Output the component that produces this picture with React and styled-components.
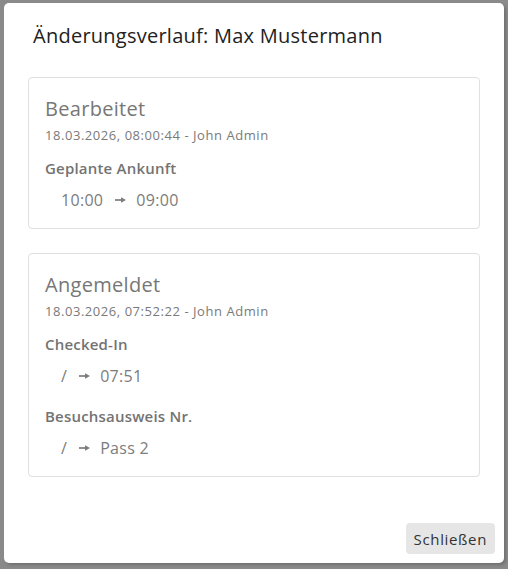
import React from 'react';
import styled, { createGlobalStyle } from 'styled-components';

const GlobalStyle = createGlobalStyle`
  html, body {
    margin: 0;
    padding: 0;
    background: #ffffff;
    font-family: "Open Sans", "Liberation Sans", sans-serif;
  }
`;

const Backdrop = styled.div`
  position: fixed;
  inset: 0;
  background-color: #8a8a8a;
  padding-top: 3px;
  overflow: hidden;
`;

const ModalWrapper = styled.div`
  width: 500px;
  height: 560px;
  margin: 0 auto;
  background-color: #ffffff;
  border-radius: 5px;
  box-shadow: 2px 2px 3px rgba(0, 0, 0, 0.18);
  display: flex;
  flex-direction: column;
  box-sizing: border-box;
`;

const ModalHeader = styled.div`
  padding: 18px 24px 0 29px;
`;

const HeaderText = styled.h2`
  margin: 0;
  font-size: 20px;
  line-height: 30px;
  font-weight: 400;
  letter-spacing: 0.25px;
  color: #222222;
`;

const ModalBody = styled.div`
  padding: 26px 24px 0 24px;
  display: flex;
  flex-direction: column;
  gap: 24px;
`;

const Card = styled.div`
  border: solid 1px #e0e0e0;
  border-radius: 4px;
  padding: 16px 16px;
`;

const CardTitle = styled.div`
  font-size: 20px;
  line-height: 30px;
  letter-spacing: 0.3px;
  color: #777777;
`;

const CardMeta = styled.div`
  margin-top: 2px;
  font-size: 13px;
  line-height: 19.5px;
  letter-spacing: 0.55px;
  color: #7a7a7a;
`;

const ChangeItem = styled.div`
  margin-top: ${(p) => (p.first ? '11.5px' : '17px')};
`;

const ChangeLabel = styled.div`
  font-size: 15px;
  line-height: 22.5px;
  font-weight: 600;
  letter-spacing: 0.2px;
  color: #737373;
`;

const ChangeValue = styled.div`
  margin-top: 8.5px;
  padding-left: 16px;
  font-size: 16px;
  line-height: 24px;
  letter-spacing: 0.3px;
  color: #7c7c7c;
  display: flex;
  align-items: center;
`;

const ArrowIcon = styled.svg`
  margin: 0 10px 0 12px;
  flex: none;
`;

const ModalFooter = styled.div`
  margin-top: auto;
  display: flex;
  justify-content: flex-end;
  padding: 0 9px 9px 9px;
`;

const CloseButton = styled.button`
  height: 31px;
  padding: 0 8px;
  border: none;
  border-radius: 4px;
  background-color: #e6e6e6;
  color: #333333;
  font-family: "Open Sans", "Liberation Sans", sans-serif;
  font-size: 15px;
  letter-spacing: 0.65px;
  cursor: pointer;
`;

const Arrow = () => (
  <ArrowIcon width="11" height="8" viewBox="0 0 11 8">
    <line x1="0" y1="4" x2="7" y2="4" stroke="#7c7c7c" strokeWidth="1.7" />
    <polygon points="6,1.3 11,4 6,6.7" fill="#7c7c7c" />
  </ArrowIcon>
);

const history = [
  {
    title: 'Bearbeitet',
    meta: '18.03.2026, 08:00:44 - John Admin',
    changes: [{ label: 'Geplante Ankunft', from: '10:00', to: '09:00' }],
  },
  {
    title: 'Angemeldet',
    meta: '18.03.2026, 07:52:22 - John Admin',
    changes: [
      { label: 'Checked-In', from: '/', to: '07:51' },
      { label: 'Besuchsausweis Nr.', from: '/', to: 'Pass 2' },
    ],
  },
];

const App = () => {
  return (
    <>
      <GlobalStyle />
      <Backdrop>
        <ModalWrapper>
          <ModalHeader>
            <HeaderText>Änderungsverlauf: Max Mustermann</HeaderText>
          </ModalHeader>
          <ModalBody>
            {history.map((entry) => (
              <Card key={entry.title}>
                <CardTitle>{entry.title}</CardTitle>
                <CardMeta>{entry.meta}</CardMeta>
                {entry.changes.map((c, i) => (
                  <ChangeItem key={c.label} first={i === 0}>
                    <ChangeLabel>{c.label}</ChangeLabel>
                    <ChangeValue>
                      <span>{c.from}</span>
                      <Arrow />
                      <span>{c.to}</span>
                    </ChangeValue>
                  </ChangeItem>
                ))}
              </Card>
            ))}
          </ModalBody>
          <ModalFooter>
            <CloseButton>Schließen</CloseButton>
          </ModalFooter>
        </ModalWrapper>
      </Backdrop>
    </>
  );
};

export default App;
